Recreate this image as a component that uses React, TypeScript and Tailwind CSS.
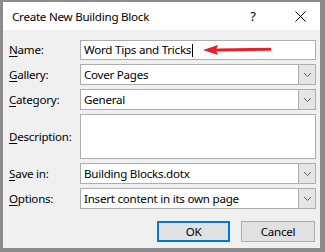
import React from "react";

const font = { fontFamily: '"Segoe UI", "Noto Sans", sans-serif' };

function Label({ u, rest }: { u: string; rest: string }) {
  return (
    <span className="text-[11.6px] tracking-[-0.25px] text-black">
      <span className="underline underline-offset-2">{u}</span>
      {rest}
    </span>
  );
}

function Chevron() {
  return (
    <svg width="9" height="6" viewBox="0 0 9 6">
      <path d="M1 1 L4.5 4.5 L8 1" fill="none" stroke="#606060" strokeWidth="1" />
    </svg>
  );
}

function Select({ value }: { value: string }) {
  return (
    <div className="flex h-[21px] w-[236px] border border-[#adadad] bg-white">
      <div className="flex flex-1 items-center pl-[3px] text-[11.6px] tracking-[-0.25px] text-black">{value}</div>
      <div className="flex w-[17px] items-center justify-center border-l border-[#adadad] bg-[#e5e5e5]">
        <Chevron />
      </div>
    </div>
  );
}

export default function App() {
  return (
    <div
      className="h-[252px] w-[325px] overflow-hidden border-b-4 border-l-[3px] border-r-[5px] border-t-2 border-[#8c8c8c] bg-[#f0f0f0]"
      style={font}
    >
      <div className="flex h-[28px] items-center bg-white pl-[9px] pt-[1px] text-[11.6px] tracking-[-0.25px] text-black">
        <span className="flex-1">Create New Building Block</span>
        <span className="w-[20px] text-center text-[13px]">?</span>
        <span className="ml-[31px] mr-[14px] flex w-[12px] items-center justify-center">
          <svg width="11" height="11" viewBox="0 0 11 11">
            <path d="M0.5 0.5 L10.5 10.5 M10.5 0.5 L0.5 10.5" stroke="#000" strokeWidth="1" />
          </svg>
        </span>
      </div>

      <div className="grid grid-cols-[71px_236px] gap-x-0 gap-y-[4px] pl-[6px] pt-[10px]">
        <div className="flex items-center"><Label u="N" rest="ame:" /></div>
        <div className="relative flex h-[20px] items-center border border-[#adadad] bg-white pl-[3px] text-[11.6px] tracking-[-0.25px] text-black">
          <span>Word Tips and Tricks</span>
          <span className="ml-[1px] inline-block h-[13px] w-[1px] bg-black" />
          <svg className="absolute left-[120px] top-[3px]" width="72" height="12" viewBox="0 0 72 12">
            <path d="M16 6 L69 5.2" stroke="#e5202a" strokeWidth="3" strokeLinecap="round" />
            <path d="M2 6 L17 1 L15 6 L17 11 Z" fill="#e5202a" />
          </svg>
        </div>

        <div className="flex items-center"><Label u="G" rest="allery:" /></div>
        <Select value="Cover Pages" />

        <div className="flex items-center"><Label u="C" rest="ategory:" /></div>
        <Select value="General" />

        <div className="flex items-center"><Label u="D" rest="escription:" /></div>
        <div className="h-[45px] border border-[#adadad] bg-white" />

        <div className="flex items-center"><Label u="S" rest="ave in:" /></div>
        <Select value="Building Blocks.dotx" />

        <div className="flex items-center"><Label u="O" rest="ptions:" /></div>
        <Select value="Insert content in its own page" />
      </div>

      <div className="flex justify-end gap-[11px] pr-[5px] pt-[12px]">
        <button className="h-[21px] w-[73px] border-2 border-[#0078d7] bg-[#e1e1e1] text-[11.6px] tracking-[-0.25px] text-black">OK</button>
        <button className="h-[21px] w-[74px] border border-[#adadad] bg-[#e1e1e1] text-[11.6px] tracking-[-0.25px] text-black">Cancel</button>
      </div>
    </div>
  );
}
